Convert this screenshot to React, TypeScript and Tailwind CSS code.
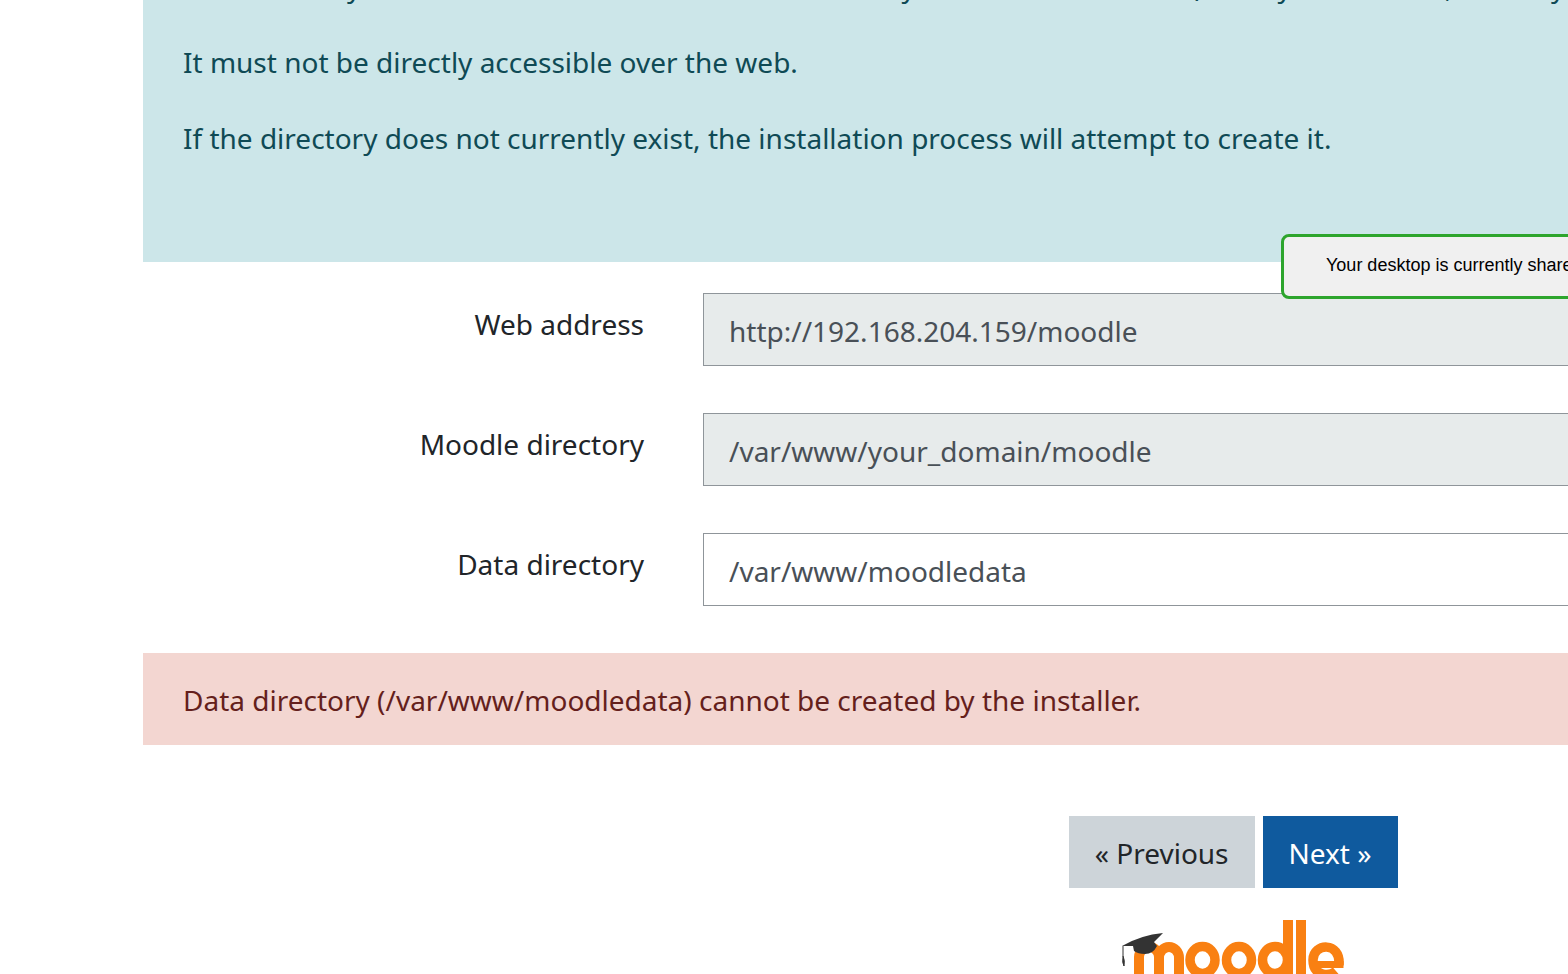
import React from "react";

type Field = { id: string; label: string; value: string; readOnly: boolean };

const fields: Field[] = [
  { id: "wwwroot", label: "Web address", value: "http://192.168.204.159/moodle", readOnly: true },
  { id: "dirroot", label: "Moodle directory", value: "/var/www/your_domain/moodle", readOnly: true },
  { id: "dataroot", label: "Data directory", value: "/var/www/moodledata", readOnly: false },
];

function FieldRow({ field }: { field: Field }) {
  return (
    <div className="flex items-start">
      <label htmlFor={field.id} className="w-[501px] shrink-0 pt-[9px] text-right text-[#212529]">
        {field.label}
      </label>
      <input
        id={field.id}
        type="text"
        defaultValue={field.value}
        readOnly={field.readOnly}
        className="ml-[59px] h-[73px] min-w-0 flex-1 border border-[#8f959a] bg-white px-[25px] pt-0.5 text-[#495057] outline-none read-only:bg-[#e7ebeb]"
      />
    </div>
  );
}

function MoodleLogo() {
  return (
    <svg width="222" height="70" viewBox="1 0 222 70" role="img" aria-label="Moodle">
      <g fill="none" stroke="#f98012" strokeWidth="10">
        <path d="M18 70V37a10 10 0 0 1 20 0V70" />
        <path d="M38 70V38a10 11 0 0 1 20 0V70" />
        <ellipse cx="81.5" cy="40" rx="12.5" ry="13.5" strokeWidth="9.5" />
        <ellipse cx="118" cy="40" rx="12.5" ry="13.5" strokeWidth="9.5" />
        <ellipse cx="154" cy="40" rx="12.5" ry="13.5" strokeWidth="9.5" />
        <path d="M167 0V58M180 0V58" />
        <path d="M218 45C220 21 192 23 192 40C192 56 208 57 215 51" strokeWidth="9.5" />
      </g>
      <path d="M195 41H222.5V48H195Z" fill="#f98012" />
      <path d="M1 26Q20 15 42 13L33 22L36 26Q32 34 24 34Q17 34 13 31L12 26Z" fill="#333" />
      <path d="M2 26L2 37Q1 43 3 46Q4 40 2 36" stroke="#333" fill="#333" />
    </svg>
  );
}

export default function App() {
  return (
    <div className="relative h-screen overflow-hidden bg-white pl-[143px] font-['Noto_Sans','Open_Sans',sans-serif] text-[28px] leading-[45px]">
      <main className="-mt-9 w-[153%]">
        <section className="flex flex-col gap-[31px] bg-[#cce6e9] pb-[101px] pl-10 text-[#0f4a55]">
          <p>
            This directory should be both readable and writeable by the web server user (usually
            'www-data', 'nobody', or 'apache').
          </p>
          <p>It must not be directly accessible over the web.</p>
          <p>If the directory does not currently exist, the installation process will attempt to create it.</p>
        </section>

        <form onSubmit={(event) => event.preventDefault()}>
          <div className="mt-[31px] flex flex-col gap-[47px]">
            {fields.map((field) => (
              <FieldRow key={field.id} field={field} />
            ))}
          </div>

          <div role="alert" className="mt-[47px] bg-[#f3d6d1] pt-[25px] pb-[22px] pl-10 text-[#651f1c]">
            Data directory (/var/www/moodledata) cannot be created by the installer.
          </div>

          <div className="mt-[71px] flex justify-center gap-2">
            <button type="submit" className="h-[72px] bg-[#cdd4d9] px-[26px] pt-0.5 text-[#212529]">
              « Previous
            </button>
            <button type="submit" className="h-[72px] bg-[#0f5a9e] px-[26px] pt-0.5 text-white">
              Next »
            </button>
          </div>
        </form>

        <footer className="mt-8 flex justify-center">
          <a href="#moodle">
            <MoodleLogo />
          </a>
        </footer>
      </main>

      <div
        role="status"
        className="absolute top-[234px] left-[1281px] h-[65px] rounded-lg border-[3px] border-[#2da52d] bg-[#f0f0f0] px-[42px] pt-4 font-['Liberation_Sans',sans-serif] text-lg leading-6 whitespace-nowrap text-black"
      >
        Your desktop is currently shared
      </div>
    </div>
  );
}
